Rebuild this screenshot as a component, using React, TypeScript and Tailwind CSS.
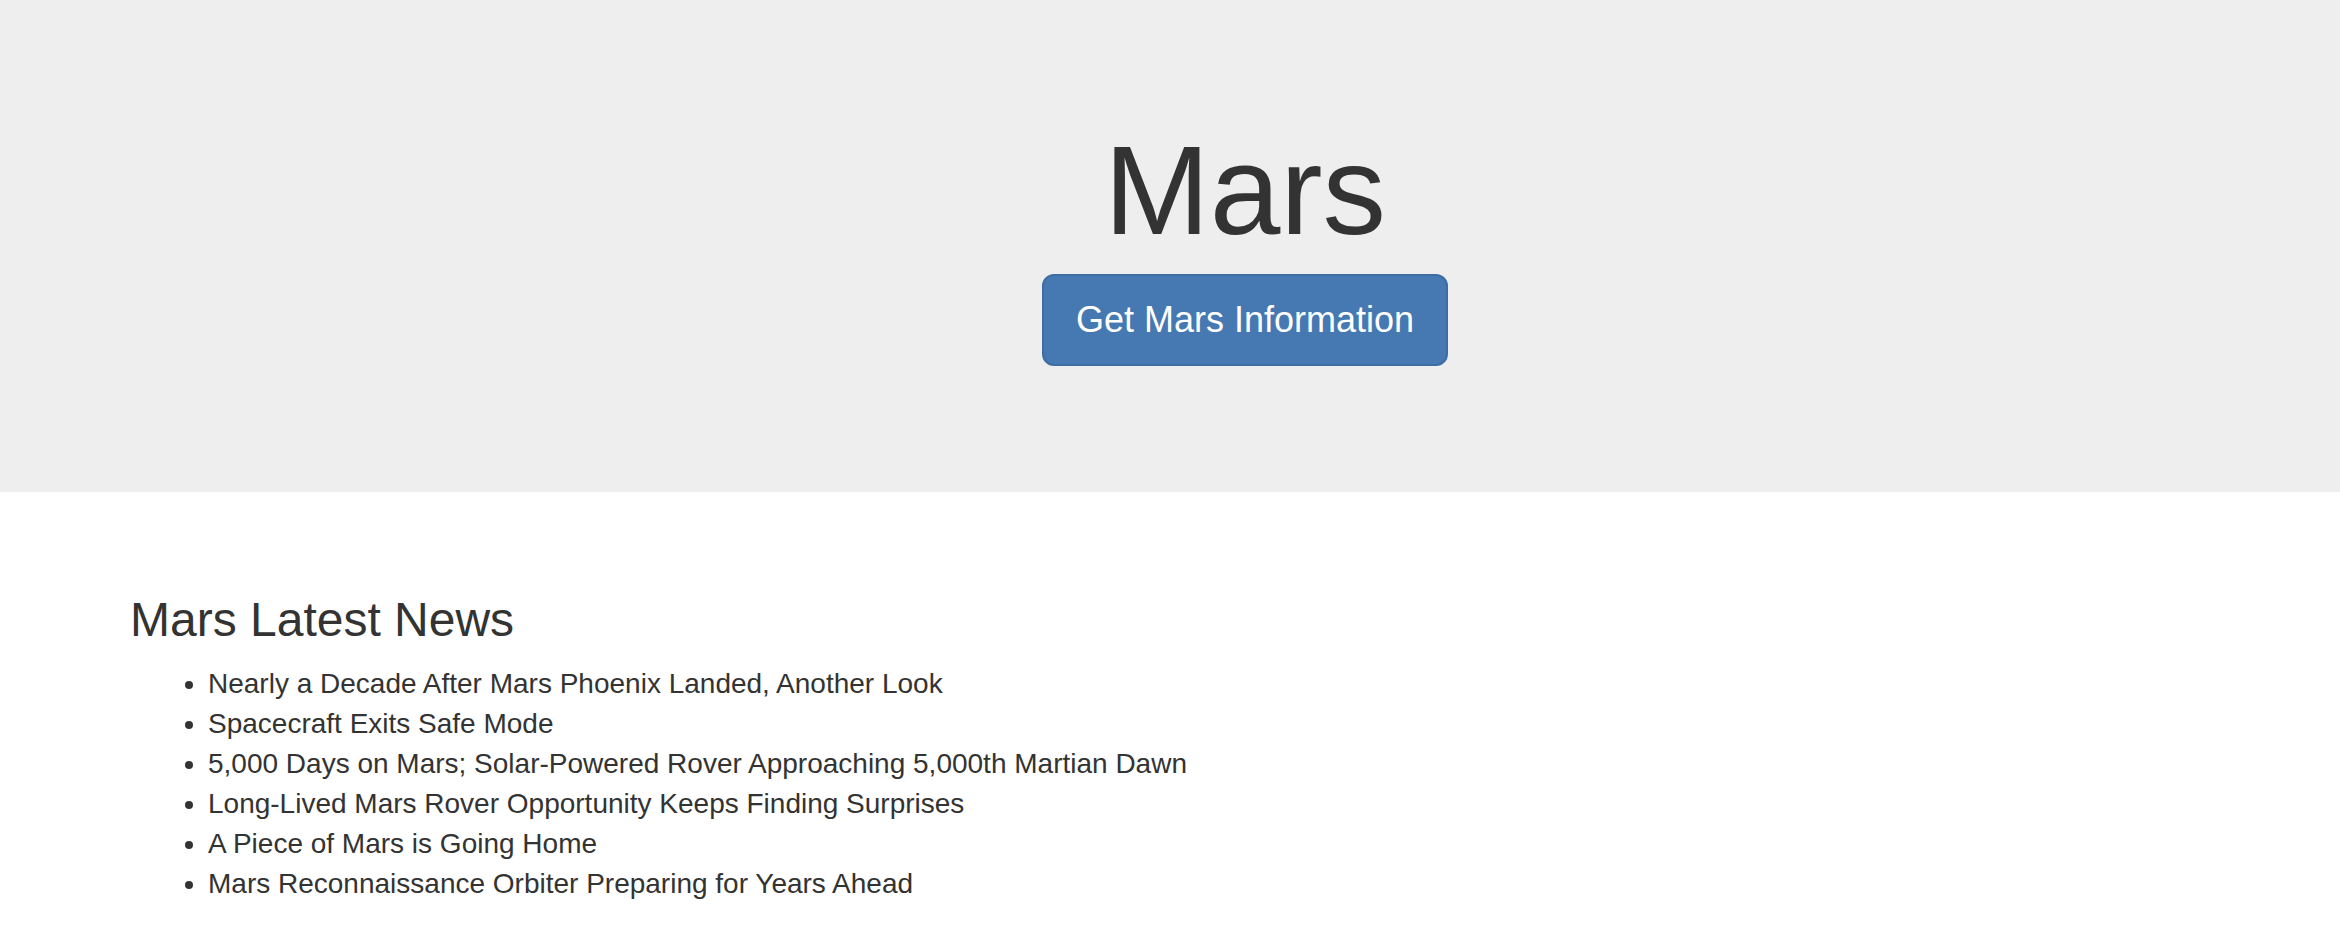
import React from 'react';

const news: string[] = [
  'Nearly a Decade After Mars Phoenix Landed, Another Look',
  'Spacecraft Exits Safe Mode',
  '5,000 Days on Mars; Solar-Powered Rover Approaching 5,000th Martian Dawn',
  'Long-Lived Mars Rover Opportunity Keeps Finding Surprises',
  'A Piece of Mars is Going Home',
  'Mars Reconnaissance Orbiter Preparing for Years Ahead',
];

const App: React.FC = () => {
  return (
    <div className="min-h-screen bg-white text-[#333333] font-['Liberation_Sans',Arial,sans-serif]">
      {/* Jumbotron */}
      <div className="h-[492px] bg-[#eeeeee] pl-[150px] pt-[121px]">
        <div className="flex flex-col items-center">
          <h1 className="m-0 text-[127px] leading-[138px] font-normal">Mars</h1>
          <button
            type="button"
            className="mt-[15px] rounded-[12px] border-2 border-[#3e6da3] bg-[#4679b2] px-[32px] py-[20px] text-[36px] leading-[48px] text-white"
          >
            Get Mars Information
          </button>
        </div>
      </div>

      {/* News */}
      <div className="pl-[130px] pt-[102px]">
        <h3 className="m-0 text-[48px] leading-[1.1] font-normal">Mars Latest News</h3>
        <ul className="mt-[17px] list-disc pl-[78px]">
          {news.map((item) => (
            <li key={item} className="text-[28px] leading-[40px]">
              {item}
            </li>
          ))}
        </ul>
      </div>
    </div>
  );
};

export default App;
